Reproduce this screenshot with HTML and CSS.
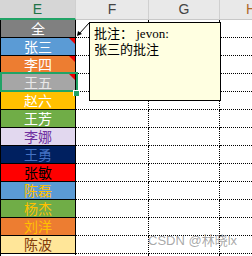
FILE: index.html
```html
<!DOCTYPE html>
<html lang="zh">
<head>
    <meta charset="UTF-8"/>
    <title>批注</title>
    <link rel="stylesheet" href="styles.css">
</head>
<body>
<div class="sheet">

    <!-- column headers -->
    <div class="head">
        <div class="col col-active">E</div>
        <div class="col">F</div>
        <div class="col">G</div>
        <div class="col col-h">H</div>
    </div>

    <div class="row"><div class="name c-all">全</div><div class="cell"></div><div class="cell"></div><div class="cell"></div></div>
    <div class="row"><div class="name c-zs has-note">张三</div><div class="cell"></div><div class="cell"></div><div class="cell"></div></div>
    <div class="row"><div class="name c-ls has-note">李四</div><div class="cell"></div><div class="cell"></div><div class="cell"></div></div>
    <div class="row">
        <div class="name c-ww has-note">王五
            <span class="sel"></span>
            <span class="handle"></span>
        </div>
        <div class="cell"></div><div class="cell"></div><div class="cell"></div>
    </div>
    <div class="row"><div class="name c-zl">赵六</div><div class="cell"></div><div class="cell"></div><div class="cell"></div></div>
    <div class="row"><div class="name c-wf">王芳</div><div class="cell"></div><div class="cell"></div><div class="cell"></div></div>
    <div class="row"><div class="name c-ln">李娜</div><div class="cell"></div><div class="cell"></div><div class="cell"></div></div>
    <div class="row"><div class="name c-wy">王勇</div><div class="cell"></div><div class="cell"></div><div class="cell"></div></div>
    <div class="row"><div class="name c-zm">张敏</div><div class="cell"></div><div class="cell"></div><div class="cell"></div></div>
    <div class="row"><div class="name c-cl">陈磊</div><div class="cell"></div><div class="cell"></div><div class="cell"></div></div>
    <div class="row"><div class="name c-yj">杨杰</div><div class="cell"></div><div class="cell"></div><div class="cell"></div></div>
    <div class="row"><div class="name c-ly">刘洋</div><div class="cell"></div><div class="cell"></div><div class="cell"></div></div>
    <div class="row"><div class="name c-cb">陈波</div><div class="cell"></div><div class="cell"></div><div class="cell"></div></div>
    <div class="row row-last"><div class="name c-empty"></div><div class="cell"></div><div class="cell"></div><div class="cell"></div></div>

    <!-- comment popup for 张三 -->
    <svg class="note-arrow" width="18" height="20" viewBox="0 0 18 20" aria-hidden="true">
        <line x1="15.5" y1="2.5" x2="5" y2="14" stroke="#000" stroke-width="1"/>
        <polygon points="3,16 4,11 8,14" fill="#000"/>
    </svg>
    <div class="note">
        批注： jevon:<br>
        张三的批注
    </div>

    <div class="mark">CSDN @林晓lx</div>
</div>
</body>
</html>
```

FILE: styles.css
```css
body {
  margin: 0;
  width: 252px;
  height: 256px;
  overflow: hidden;
  background: #fff;
  font-family: "Noto Sans CJK SC", sans-serif;
}
.sheet {
  position: relative;
  width: 252px;
  height: 256px;
  overflow: hidden;
}

/* column header strip */
.head {
  display: grid;
  grid-template-columns: 76px 73px 71px 1fr;
  height: 20px;
  background: #e9e9e9;
}
.col {
  height: 19px;
  line-height: 19px;
  text-align: center;
  font-family: "Liberation Sans", sans-serif;
  font-size: 14px;
  color: #444;
  border-right: 1px solid #d0d0d0;
  border-bottom: 1px solid #c8c8c8;
}
.col-active {
  height: 18px;
  line-height: 18px;
  background: #d6d6d6;
  color: #217346;
  border-bottom: 2px solid #21a366;
}
.col-h {
  text-align: left;
  padding-left: 26px;
  color: #b06a2a;
  border-right: none;
  overflow: hidden;
}

/* rows */
.row {
  display: grid;
  grid-template-columns: 76px 73px 71px 1fr;
  height: 18px;
}
.row-last {
  height: 3px;
  overflow: hidden;
}
.name {
  position: relative;
  height: 17px;
  line-height: 17px;
  text-align: center;
  font-size: 14px;
  border-left: 1px solid #000;
  border-right: 1px solid #000;
  border-bottom: 1px solid #000;
}
.cell {
  height: 17px;
  border-bottom: 1px dotted #000;
  border-right: 1px dotted #000;
}
.cell:last-child {
  border-right: none;
}

.c-all { background: #808080; color: #fff; }
.c-zs { background: #5b9bd5; color: #fff; }
.c-ls { background: #ed7d31; color: #fff; }
.c-ww { background: #a6a6a6; color: #e8e8e8; }
.c-zl { background: #ffc000; color: #fff; }
.c-wf { background: #70ad47; color: #fff; }
.c-ln { background: #e2d8ef; color: #7030a0; }
.c-wy { background: #002060; color: #4472c4; }
.c-zm { background: #ff0000; color: #000; }
.c-cl { background: #5b9bd5; color: #ffc000; }
.c-yj { background: #70ad47; color: #ffc000; }
.c-ly { background: #ed7d31; color: #ffc000; }
.c-cb { background: #ffe699; color: #833c0b; }
.c-empty { background: #fff; border-bottom: none; border-right: 1px dotted #000; }

/* red comment marker */
.has-note::after {
  content: "";
  position: absolute;
  top: 0;
  right: 0;
  border-top: 6px solid #e00;
  border-left: 6px solid transparent;
}

/* active cell */
.sel {
  position: absolute;
  left: -1px;
  top: -2px;
  width: 74px;
  height: 16px;
  border: 2px solid #21a366;
}
.handle {
  position: absolute;
  right: -4px;
  bottom: -5px;
  width: 5px;
  height: 5px;
  background: #21a366;
  border-left: 1px solid #fff;
  border-top: 1px solid #fff;
  z-index: 2;
}

/* comment popup */
.note-arrow {
  position: absolute;
  left: 74px;
  top: 20px;
}
.note {
  position: absolute;
  left: 89px;
  top: 22px;
  width: 126px;
  height: 74px;
  padding: 3px 0 0 4px;
  background: #ffffe1;
  border: 1px solid #000;
  font-family: "Liberation Serif", "Noto Sans CJK SC", serif;
  font-size: 13px;
  line-height: 16px;
  color: #000;
}

.mark {
  position: absolute;
  left: 148px;
  top: 230px;
  font-family: "Liberation Sans", "Noto Sans CJK SC", sans-serif;
  font-size: 13px;
  color: rgba(140, 140, 140, 0.75);
  white-space: nowrap;
}
```
